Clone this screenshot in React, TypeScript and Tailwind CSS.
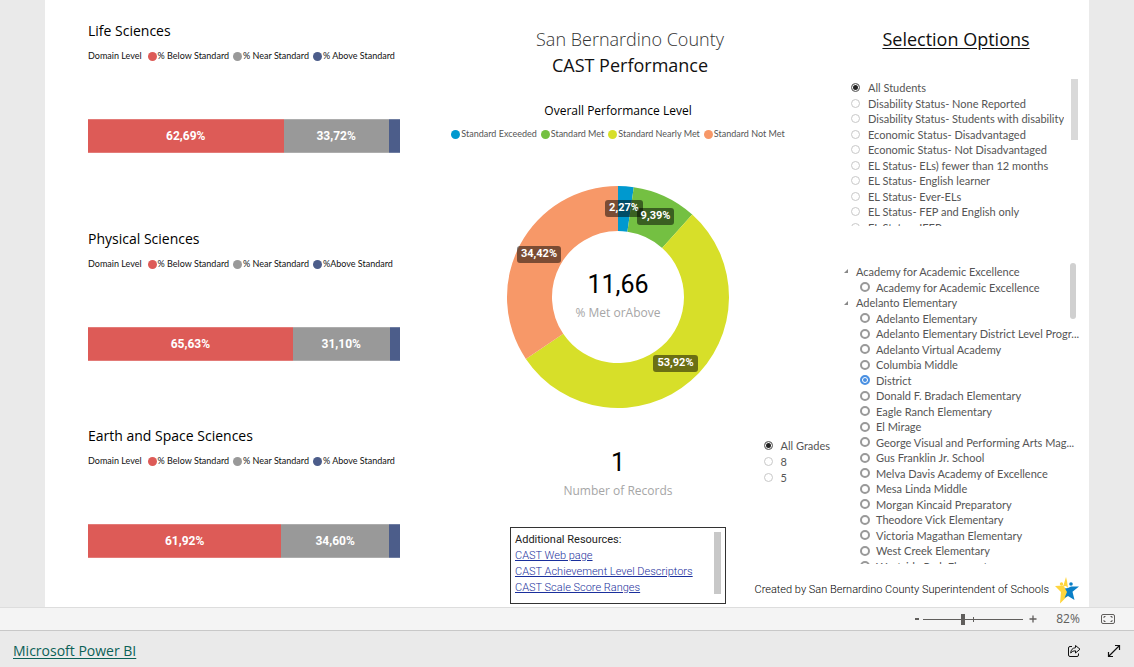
import { useState } from 'react'

interface Segment {
  label: string
  value: number
  text?: string
  color: string
}

interface Slice {
  label: string
  value: number
  text: string
  color: string
  tag: { x: number; y: number; w: number }
}

interface Domain {
  title: string
  spacing: string
  segments: Segment[]
}

const DOMAINS: Domain[] = [
  {
    title: 'Life Sciences',
    spacing: 'mt-0',
    segments: [
      { label: '% Below Standard', value: 62.69, text: '62,69%', color: '#DD5B57' },
      { label: '% Near Standard', value: 33.72, text: '33,72%', color: '#999999' },
      { label: '% Above Standard', value: 3.59, color: '#4C5D8A' },
    ],
  },
  {
    title: 'Physical Sciences',
    spacing: 'mt-[76px]',
    segments: [
      { label: '% Below Standard', value: 65.63, text: '65,63%', color: '#DD5B57' },
      { label: '% Near Standard', value: 31.1, text: '31,10%', color: '#999999' },
      { label: '%Above Standard', value: 3.27, color: '#4C5D8A' },
    ],
  },
  {
    title: 'Earth and Space Sciences',
    spacing: 'mt-[65px]',
    segments: [
      { label: '% Below Standard', value: 61.92, text: '61,92%', color: '#DD5B57' },
      { label: '% Near Standard', value: 34.6, text: '34,60%', color: '#999999' },
      { label: '% Above Standard', value: 3.48, color: '#4C5D8A' },
    ],
  },
]

const SLICES: Slice[] = [
  { label: 'Standard Exceeded', value: 2.27, text: '2,27%', color: '#0099CF', tag: { x: 99, y: 15, w: 38 } },
  { label: 'Standard Met', value: 9.39, text: '9,39%', color: '#74C042', tag: { x: 131, y: 23, w: 37 } },
  { label: 'Standard Nearly Met', value: 53.92, text: '53,92%', color: '#D7DF29', tag: { x: 147, y: 170, w: 45 } },
  { label: 'Standard Not Met', value: 34.42, text: '34,42%', color: '#F79868', tag: { x: 11, y: 61, w: 44 } },
]

const STUDENT_GROUPS = [
  'All Students',
  'Disability Status- None Reported',
  'Disability Status- Students with disability',
  'Economic Status- Disadvantaged',
  'Economic Status- Not Disadvantaged',
  'EL Status- ELs) fewer than 12 months',
  'EL Status- English learner',
  'EL Status- Ever-ELs',
  'EL Status- FEP and English only',
  'EL Status- IFEP',
]

const DISTRICTS = [
  {
    name: 'Academy for Academic Excellence',
    height: 'h-8',
    schools: ['Academy for Academic Excellence'],
  },
  {
    name: 'Adelanto Elementary',
    height: 'h-[279px]',
    schools: [
      'Adelanto Elementary',
      'Adelanto Elementary District Level Progr...',
      'Adelanto Virtual Academy',
      'Columbia Middle',
      'District',
      'Donald F. Bradach Elementary',
      'Eagle Ranch Elementary',
      'El Mirage',
      'George Visual and Performing Arts Mag...',
      'Gus Franklin Jr. School',
      'Melva Davis Academy of Excellence',
      'Mesa Linda Middle',
      'Morgan Kincaid Preparatory',
      'Theodore Vick Elementary',
      'Victoria Magathan Elementary',
      'West Creek Elementary',
      'Westside Park Elementary',
    ],
  },
]

const RESOURCES = ['CAST Web page', 'CAST Achievement Level Descriptors', 'CAST Scale Score Ranges']

function slicePath(start: number, end: number) {
  const c = 112
  const outer = 111
  const inner = 66
  const point = (r: number, t: number) => {
    const a = t * 2 * Math.PI - Math.PI / 2
    return `${(c + r * Math.cos(a)).toFixed(2)} ${(c + r * Math.sin(a)).toFixed(2)}`
  }
  const large = end - start > 0.5 ? 1 : 0
  return `M${point(outer, start)}A${outer} ${outer} 0 ${large} 1 ${point(outer, end)}L${point(inner, end)}A${inner} ${inner} 0 ${large} 0 ${point(inner, start)}Z`
}

function Dot({ color }: { color: string }) {
  return <span className="size-[9px] shrink-0 rounded-full" style={{ backgroundColor: color }} />
}

function DomainChart({ title, spacing, segments }: Domain) {
  return (
    <section className={spacing}>
      <h2 className="text-sm leading-5 text-black">{title}</h2>
      <div className="mt-[7px] flex h-4 items-center gap-1 whitespace-nowrap font-[Lato,sans-serif] text-[9px] text-[#111]">
        <span className="mr-[2px]">Domain Level</span>
        {segments.map((s) => (
          <span key={s.label} className="flex items-center gap-px">
            <Dot color={s.color} />
            {s.label}
          </span>
        ))}
      </div>
      <div className="mt-[55px] flex h-[34px] font-[Roboto,sans-serif] text-xs font-bold text-white">
        {segments.map((s) => (
          <div
            key={s.label}
            className="flex items-center justify-center border-y border-white/20"
            style={{ width: `${s.value}%`, backgroundColor: s.color }}
          >
            {s.text}
          </div>
        ))}
      </div>
    </section>
  )
}

function Donut() {
  let total = 0
  return (
    <div className="relative mt-[43px]">
      <svg width="224" height="224" viewBox="0 0 224 224" role="img" aria-label="Overall Performance Level">
        {SLICES.map((s) => {
          const start = total
          total += s.value / 100
          return <path key={s.label} d={slicePath(start, total)} fill={s.color} />
        })}
        {SLICES.map((s) => (
          <g key={s.label}>
            <rect x={s.tag.x} y={s.tag.y} width={s.tag.w} height="17" rx="3" fill="#000" fillOpacity="0.5" />
            <text
              x={s.tag.x + s.tag.w / 2}
              y={s.tag.y + 11}
              textAnchor="middle"
              className="fill-white font-[Roboto,sans-serif] text-[11px] font-bold"
            >
              {s.text}
            </text>
          </g>
        ))}
      </svg>
      <div className="absolute inset-0 flex flex-col items-center justify-center">
        <span className="font-[Roboto,sans-serif] text-[25px] leading-8 text-black">11,66</span>
        <span className="text-xs leading-6 text-[#a6a6a6]">% Met orAbove</span>
      </div>
    </div>
  )
}

interface RadioProps {
  name: string
  label: string
  checked: boolean
  onSelect: () => void
}

function Radio({ name, label, checked, onSelect }: RadioProps) {
  return (
    <label className="flex items-center gap-2 whitespace-nowrap font-[Lato,sans-serif] text-[11px] leading-none text-[#555]">
      <input
        type="radio"
        name={name}
        checked={checked}
        onChange={onSelect}
        className="size-[9px] shrink-0 appearance-none rounded-full border border-[#c8c8c8] bg-white checked:border-[#777] checked:bg-[#222] checked:shadow-[inset_0_0_0_1px_white]"
      />
      {label}
    </label>
  )
}

function SchoolRadio({ name, label, checked, onSelect }: RadioProps) {
  return (
    <label className="flex items-center gap-[6px] pl-[17px]">
      <input
        type="radio"
        name={name}
        checked={checked}
        onChange={onSelect}
        className="size-[10px] shrink-0 appearance-none rounded-full border-2 border-[#999] bg-white checked:border-[#4a90e2] checked:bg-[#4a90e2] checked:shadow-[inset_0_0_0_1px_white]"
      />
      {label}
    </label>
  )
}

function StarLogo() {
  return (
    <svg width="24" height="28" viewBox="0 0 24 28" className="shrink-0" aria-hidden="true">
      <path d="M11 1L8.400 9.600L0 10L6 16L5 27.500L12.500 20L12 13.500L8.500 10.500L11 10L13 12L12 5Z" fill="#FFD53D" />
      <path d="M13 12L16 10.500L24 10.500L17.500 15.800L19.500 24L13 20L9.500 22L12 16L10 12.500Z" fill="#0A7FC7" />
      <circle cx="6.500" cy="8" r="1.700" fill="#FFD53D" />
      <circle cx="16" cy="8" r="1.800" fill="#0A7FC7" />
    </svg>
  )
}

export default function App() {
  const [group, setGroup] = useState('All Students')
  const [school, setSchool] = useState('Adelanto Elementary/District')
  const [grade, setGrade] = useState('All Grades')
  const [closed, setClosed] = useState<string[]>([])
  const [zoom, setZoom] = useState(40)

  const toggle = (name: string) =>
    setClosed((prev) => (prev.includes(name) ? prev.filter((n) => n !== name) : [...prev, name]))

  return (
    <div className="flex min-h-screen flex-col bg-[#eaeaea] font-['Open_Sans','Noto_Sans',sans-serif]">
      <main className="mx-[45px] grid flex-1 grid-cols-[minmax(0,355fr)_minmax(0,436fr)_minmax(0,253fr)] bg-white">
        {/* Domain bars */}
        <div className="pl-[43px] pt-[21px]">
          {DOMAINS.map((d) => (
            <DomainChart key={d.title} {...d} />
          ))}
        </div>

        {/* Overall performance */}
        <div className="flex flex-col items-center pb-[3px] pt-[26px]">
          <h1 className="pl-6 text-center text-lg leading-[26px] text-[#111]">
            <span className="block font-light text-[#333]">San Bernardino County</span>
            CAST Performance
          </h1>
          <h2 className="mt-[23px] text-xs leading-5 text-black">Overall Performance Level</h2>
          <div className="mt-[5px] flex h-4 items-center gap-1 whitespace-nowrap font-[Lato,sans-serif] text-[9px] text-[#555]">
            {SLICES.map((s) => (
              <span key={s.label} className="flex items-center gap-px">
                <Dot color={s.color} />
                {s.label}
              </span>
            ))}
          </div>
          <Donut />

          <div className="mt-7 grid w-full grid-cols-[1fr_auto_1fr]">
            <div className="col-start-2 flex flex-col items-center pt-[10px]">
              <span className="font-[Roboto,sans-serif] text-[25px] leading-8 text-black">1</span>
              <span className="mt-[2px] text-xs leading-5 text-[#a6a6a6]">Number of Records</span>
            </div>
            <fieldset className="mr-[6px] grid h-12 auto-rows-fr justify-self-end">
              {['All Grades', '8', '5'].map((g) => (
                <Radio key={g} name="grade" label={g} checked={grade === g} onSelect={() => setGrade(g)} />
              ))}
            </fieldset>
          </div>

          <div className="mt-[26px] flex w-[216px] justify-between border border-[#333] p-1 pb-[7px] font-[Roboto,sans-serif] text-[11px] leading-4">
            <div className="whitespace-nowrap text-[#222]">
              <p>Additional Resources:</p>
              {RESOURCES.map((r) => (
                <a key={r} href="#" className="block font-light text-[#1a2f9c] underline">
                  {r}
                </a>
              ))}
            </div>
            <div className="h-[62px] w-[7px] bg-[#c8c8c8]" />
          </div>
        </div>

        {/* Slicers */}
        <div className="flex flex-col pb-[3px] pl-[7px] pt-[26px]">
          <h2 className="pr-5 text-center text-lg leading-[26px] text-[#111] underline underline-offset-2">
            Selection Options
          </h2>

          <div className="mt-[27px] flex justify-between pl-2 pr-[11px]">
            <div className="h-[147px] overflow-hidden pt-px">
              <fieldset className="grid h-[155px] auto-rows-fr">
                {STUDENT_GROUPS.map((g) => (
                  <Radio key={g} name="group" label={g} checked={group === g} onSelect={() => setGroup(g)} />
                ))}
              </fieldset>
            </div>
            <div className="h-[61px] w-[7px] bg-[#d9d9d9]" />
          </div>

          <div className="mt-[37px] flex h-[301px] pr-[13px] font-[Lato,sans-serif] text-[11px] leading-none text-[#555]">
            <div className="w-0 flex-1 whitespace-nowrap [clip-path:inset(0_-12px_0_0)]">
              {DISTRICTS.map((d) => (
                <div key={d.name} className={closed.includes(d.name) ? 'h-4' : `grid auto-rows-fr ${d.height}`}>
                  <button
                    type="button"
                    onClick={() => toggle(d.name)}
                    className="flex items-center gap-[7px] text-left"
                  >
                    <svg width="6" height="6" viewBox="0 0 6 6" aria-hidden="true">
                      <path d="M5 1V5H1Z" fill="#888" />
                    </svg>
                    {d.name}
                  </button>
                  {!closed.includes(d.name) &&
                    d.schools.map((s) => (
                      <SchoolRadio
                        key={s}
                        name="school"
                        label={s}
                        checked={school === `${d.name}/${s}`}
                        onSelect={() => setSchool(`${d.name}/${s}`)}
                      />
                    ))}
                </div>
              ))}
            </div>
            <div className="h-14 w-[6px] rounded-full bg-[#d0d0d0]" />
          </div>

          <div className="mt-auto flex items-center justify-end gap-[6px] whitespace-nowrap pr-[10px] font-[Roboto,sans-serif] text-[11px] text-black">
            <span className="shrink-0 font-light">Created by San Bernardino County Superintendent of Schools</span>
            <StarLogo />
          </div>
        </div>
      </main>

      {/* Zoom bar */}
      <div className="flex h-6 items-center justify-end border-y border-t-[#ddd] border-b-[#c8c8c8] bg-[#f4f4f4] pr-[18px] text-[#605e5c]">
        <button type="button" aria-label="Zoom out" className="w-3">
          <svg width="12" height="12" viewBox="0 0 12 12">
            <path d="M4 6H8" stroke="currentColor" strokeWidth="2" />
          </svg>
        </button>
        <div className="relative flex w-[100px] items-center">
          <input
            type="range"
            aria-label="Zoom"
            value={zoom}
            onChange={(e) => setZoom(Number(e.target.value))}
            className="h-3 w-full appearance-none bg-[linear-gradient(#605e5c,#605e5c)] bg-[length:100%_1px] bg-center bg-no-repeat [&::-webkit-slider-thumb]:h-[11px] [&::-webkit-slider-thumb]:w-1 [&::-webkit-slider-thumb]:appearance-none [&::-webkit-slider-thumb]:bg-[#605e5c]"
          />
          <span className="absolute left-1/2 h-[5px] w-px bg-[#605e5c]" />
        </div>
        <button type="button" aria-label="Zoom in" className="ml-1">
          <svg width="12" height="12" viewBox="0 0 12 12">
            <path d="M6 2.500V9.500M2.500 6H9.500" stroke="currentColor" strokeWidth="1.300" />
          </svg>
        </button>
        <span className="w-[62px] pr-1 text-center text-xs">{Math.round(zoom * 2.05)}%</span>
        <button type="button" aria-label="Fit to page">
          <svg width="15" height="12" viewBox="0 0 15 12" fill="none" stroke="currentColor">
            <rect x="0.500" y="1.500" width="13" height="9" rx="1.500" />
            <path d="M3 5V3.500H4.500M9.500 3.500H11V5M11 7V8.500H9.500M4.500 8.500H3V7" />
          </svg>
        </button>
      </div>

      <footer className="flex h-9 items-center px-[13px] pt-1">
        <a href="#" className="text-sm leading-5 text-[#0b6157] underline underline-offset-2">
          Microsoft Power BI
        </a>
        <div className="ml-auto flex items-center gap-[26px] text-[#111]">
          <button type="button" aria-label="Share">
            <svg width="14" height="14" viewBox="0 0 14 14" fill="none" stroke="currentColor" strokeLinejoin="round">
              <path d="M5 2.500H3Q1.500 2.500 1.500 4V11Q1.500 12.500 3 12.500H10Q11.500 12.500 11.500 11V9.500" />
              <path d="M8.500 1.500L13 5.200L8.500 9V6.800Q5.500 6.500 3.700 9Q4 4.200 8.500 3.700Z" />
            </svg>
          </button>
          <button type="button" aria-label="Full screen">
            <svg width="14" height="14" viewBox="0 0 14 14" fill="none" stroke="currentColor" strokeWidth="1.200">
              <path d="M1.500 12.500L12.500 1.500M8 1.500H12.500V6M1.500 8V12.500H6" />
            </svg>
          </button>
        </div>
      </footer>
    </div>
  )
}
